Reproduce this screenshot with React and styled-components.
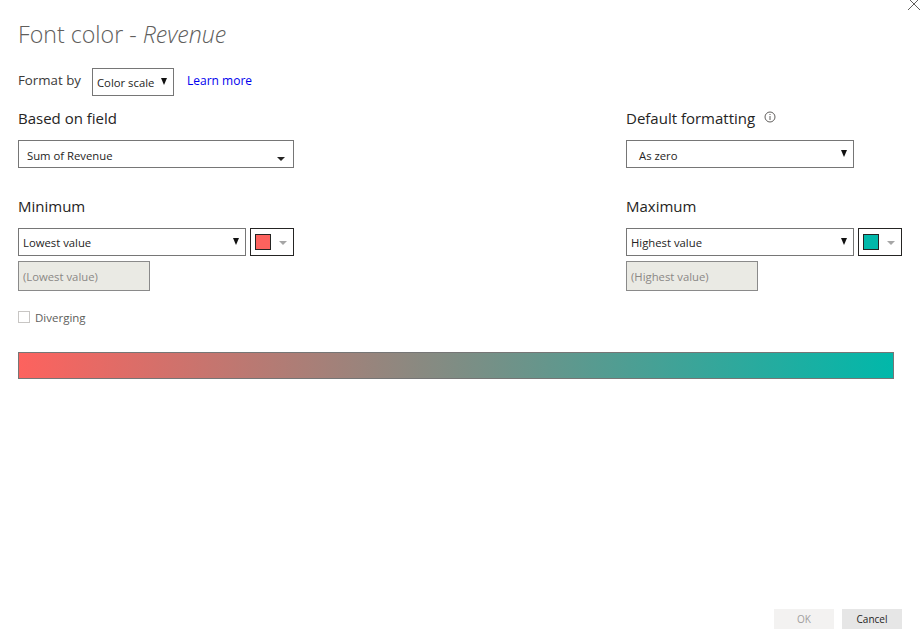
import styled, { createGlobalStyle } from "styled-components";

const GlobalStyle = createGlobalStyle`
	html, body {
		margin: 0;
		padding: 0;
		background: #fff;
	}
	body {
		font-family: "Open Sans", "Noto Sans", "Liberation Sans", sans-serif;
		color: #252423;
	}
`;

const Dialog = styled.div`
	position: relative;
	box-sizing: border-box;
	width: 921px;
	height: 638px;
	padding: 19px 19px 9px 18px;
	display: flex;
	flex-direction: column;
	overflow: hidden;
`;

const CloseBtn = styled.button`
	position: absolute;
	top: -3px;
	right: 0;
	width: 14px;
	height: 14px;
	padding: 0;
	border: 0;
	background: none;
	svg {
		display: block;
	}
`;

const Title = styled.h1`
	margin: 0;
	height: 30px;
	font-size: 23.2px;
	line-height: 30px;
	font-weight: 300;
	color: #605e5c;
	em {
		font-style: italic;
	}
`;

const FormatRow = styled.div`
	display: flex;
	align-items: center;
	height: 28px;
	margin-top: 19px;
	font-size: 13.3px;
	color: #3b3a39;
`;

const FormatLabel = styled.span`
	width: 74px;
	margin-top: -4px;
`;

const LearnMore = styled.a`
	margin-left: 13px;
	margin-top: -3px;
	font-size: 12px;
	color: #0000ee;
	text-decoration: none;
`;

const Columns = styled.div`
	display: grid;
	grid-template-columns: 276px 276px;
	justify-content: space-between;
	margin-top: 11px;
`;

const Column = styled.div`
	display: flex;
	flex-direction: column;
`;

const Heading = styled.div`
	display: flex;
	align-items: center;
	height: 22px;
	margin-top: ${(p) => p.$top || 0}px;
	margin-bottom: 11px;
	font-size: 15px;
	line-height: 22px;
	color: #252423;
`;

const InfoIcon = styled.svg`
	margin-left: 9px;
	margin-top: -2px;
`;

const Select = styled.div`
	box-sizing: border-box;
	display: flex;
	align-items: center;
	justify-content: space-between;
	width: ${(p) => p.$width};
	height: 28px;
	flex: ${(p) => (p.$grow ? 1 : "none")};
	padding: 0 ${(p) => p.$right || 6}px 0 ${(p) => p.$left || 4}px;
	border: 1px solid #767676;
	background: #fff;
	font-size: 11.3px;
	color: #252423;
`;

const SelectText = styled.span`
	margin-top: ${(p) => p.$top || 0}px;
`;

const Arrow = styled.span`
	width: 0;
	height: 0;
	border-left: 3.5px solid transparent;
	border-right: 3.5px solid transparent;
	border-top: 7px solid #111;
	margin-top: -1px;
`;

const SmallCaret = styled.span`
	width: 0;
	height: 0;
	margin-top: 10px;
	border-left: 4px solid transparent;
	border-right: 4px solid transparent;
	border-top: 4px solid #252423;
`;

const ValueRow = styled.div`
	display: flex;
	gap: 4px;
`;

const ColorPicker = styled.div`
	box-sizing: border-box;
	display: flex;
	align-items: center;
	justify-content: space-between;
	width: 44px;
	height: 28px;
	padding: 0 6px 0 4px;
	border: 1px solid #252423;
`;

const Swatch = styled.span`
	box-sizing: border-box;
	width: 16px;
	height: 16px;
	border: 1px solid #252423;
	background: ${(p) => p.$color};
`;

const GreyCaret = styled.span`
	width: 0;
	height: 0;
	margin-top: 2px;
	border-left: 4px solid transparent;
	border-right: 4px solid transparent;
	border-top: 4px solid #a6a6a6;
`;

const DisabledInput = styled.div`
	box-sizing: border-box;
	width: 132px;
	height: 30px;
	margin-top: 5px;
	padding-left: 4px;
	border: 1px solid #8a8a8a;
	background: #eaeae4;
	font-size: 11.3px;
	line-height: 30px;
	color: #8a8886;
`;

const CheckRow = styled.label`
	display: flex;
	align-items: center;
	height: 18px;
	margin-top: 17px;
	font-size: 11.5px;
	color: #605e5c;
`;

const CheckBox = styled.span`
	box-sizing: border-box;
	width: 12px;
	height: 12px;
	margin-right: 5px;
	border: 1px solid #c8c6c4;
`;

const GradientBar = styled.div`
	box-sizing: border-box;
	width: 876px;
	height: 27px;
	margin-top: 26px;
	border: 1px solid #767676;
	background: linear-gradient(to right, #fd625e, #01b8aa);
`;

const Footer = styled.div`
	display: flex;
	justify-content: flex-end;
	gap: 8px;
	margin-top: auto;
`;

const Button = styled.button`
	width: 60px;
	height: 20px;
	padding: 0;
	border: 0;
	font-family: inherit;
	font-size: 10px;
	background: ${(p) => (p.disabled ? "#f3f2f1" : "#e6e6e6")};
	color: ${(p) => (p.disabled ? "#a19f9d" : "#252423")};
`;

const App = () => {
	return (
		<>
			<GlobalStyle />
			<Dialog>
				<CloseBtn aria-label="Close">
					<svg width="14" height="14" viewBox="0 0 14 14">
						<path d="M1 1 L13 13 M13 1 L1 13" stroke="#605e5c" strokeWidth="1" fill="none" />
					</svg>
				</CloseBtn>
				<Title>
					Font color - <em>Revenue</em>
				</Title>
				<FormatRow>
					<FormatLabel>Format by</FormatLabel>
					<Select $width="82px">
						<SelectText $top={1}>Color scale</SelectText>
						<Arrow />
					</Select>
					<LearnMore href="#">Learn more</LearnMore>
				</FormatRow>
				<Columns>
					<Column>
						<Heading>Based on field</Heading>
						<Select $width="276px" $left={8} $right={8}>
							<SelectText $top={2}>Sum of Revenue</SelectText>
							<SmallCaret />
						</Select>
						<Heading $top={27}>Minimum</Heading>
						<ValueRow>
							<Select $grow>
								<SelectText>Lowest value</SelectText>
								<Arrow />
							</Select>
							<ColorPicker>
								<Swatch $color="#fd625e" />
								<GreyCaret />
							</ColorPicker>
						</ValueRow>
						<DisabledInput>(Lowest value)</DisabledInput>
						<CheckRow>
							<CheckBox />
							Diverging
						</CheckRow>
					</Column>
					<Column>
						<Heading>
							Default formatting
							<InfoIcon width="12" height="12" viewBox="0 0 12 12">
								<circle cx="6" cy="6" r="5" stroke="#605e5c" strokeWidth="1" fill="none" />
								<path d="M6 5 V9 M6 3 V4" stroke="#605e5c" strokeWidth="1" />
							</InfoIcon>
						</Heading>
						<Select $width="228px" $left={12}>
							<SelectText $top={2}>As zero</SelectText>
							<Arrow />
						</Select>
						<Heading $top={27}>Maximum</Heading>
						<ValueRow>
							<Select $grow>
								<SelectText>Highest value</SelectText>
								<Arrow />
							</Select>
							<ColorPicker>
								<Swatch $color="#01b8aa" />
								<GreyCaret />
							</ColorPicker>
						</ValueRow>
						<DisabledInput>(Highest value)</DisabledInput>
					</Column>
				</Columns>
				<GradientBar />
				<Footer>
					<Button disabled>OK</Button>
					<Button>Cancel</Button>
				</Footer>
			</Dialog>
		</>
	);
};

export default App;
